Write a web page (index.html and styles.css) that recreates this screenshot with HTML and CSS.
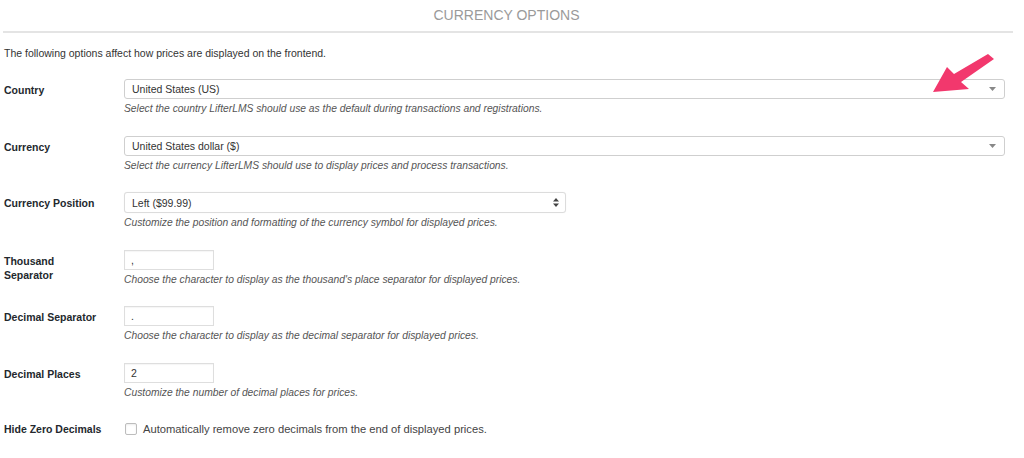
FILE: index.html
```html
<!DOCTYPE html>
<html>
<head>
<meta charset="utf-8">
<link rel="stylesheet" href="styles.css">
</head>
<body>
<div class="page">
  <h2 class="title">CURRENCY OPTIONS</h2>
  <div class="rule"></div>
  <p class="intro">The following options affect how prices are displayed on the frontend.</p>

  <div class="row">
    <div class="label">Country</div>
    <div class="field">
      <div class="select wide"><span>United States (US)</span>
        <svg class="caret" width="7" height="4" viewBox="0 0 7 4"><path d="M0 0H7L3.5 4Z" fill="#888"/></svg>
      </div>
      <div class="desc">Select the country LifterLMS should use as the default during transactions and registrations.</div>
    </div>
  </div>

  <div class="row">
    <div class="label">Currency</div>
    <div class="field">
      <div class="select wide"><span>United States dollar ($)</span>
        <svg class="caret" width="7" height="4" viewBox="0 0 7 4"><path d="M0 0H7L3.5 4Z" fill="#888"/></svg>
      </div>
      <div class="desc">Select the currency LifterLMS should use to display prices and process transactions.</div>
    </div>
  </div>

  <div class="row">
    <div class="label">Currency Position</div>
    <div class="field">
      <div class="select native"><span>Left ($99.99)</span>
        <svg class="updown" width="6" height="9" viewBox="0 0 6 9"><path d="M0 3.6H6L3 0Z M0 5.4H6L3 9Z" fill="#444"/></svg>
      </div>
      <div class="desc">Customize the position and formatting of the currency symbol for displayed prices.</div>
    </div>
  </div>

  <div class="row">
    <div class="label">Thousand<br>Separator</div>
    <div class="field">
      <div class="input">,</div>
      <div class="desc">Choose the character to display as the thousand's place separator for displayed prices.</div>
    </div>
  </div>

  <div class="row">
    <div class="label">Decimal Separator</div>
    <div class="field">
      <div class="input">.</div>
      <div class="desc">Choose the character to display as the decimal separator for displayed prices.</div>
    </div>
  </div>

  <div class="row">
    <div class="label">Decimal Places</div>
    <div class="field">
      <div class="input">2</div>
      <div class="desc">Customize the number of decimal places for prices.</div>
    </div>
  </div>

  <div class="row last">
    <div class="label">Hide Zero Decimals</div>
    <div class="field check-line">
      <span class="checkbox"></span>
      <span class="check-text">Automatically remove zero decimals from the end of displayed prices.</span>
    </div>
  </div>

  <svg class="pointer" width="70" height="48" viewBox="926 50 70 48">
    <polygon points="933,92 947,67 954,74 988,54 994,59 961,82 969,89" fill="#f2386d"/>
  </svg>
</div>
</body>
</html>
```

FILE: styles.css
```css
html, body {
  margin: 0;
  padding: 0;
  background: #fff;
}
body {
  font-family: "Liberation Sans", Arial, Helvetica, sans-serif;
  color: #23282d;
}
.page {
  position: relative;
  padding: 0 19px 0 4px;
}
.title {
  margin: 0;
  padding-top: 7px;
  font-size: 14px;
  line-height: 16px;
  font-weight: normal;
  text-align: center;
  color: #9a9a9a;
  padding-left: 4px;
}
.rule {
  margin: 8px -8px 0 -1px;
  height: 2px;
  background: #e4e4e4;
}
.intro {
  margin: 13px 0 19px 0;
  font-size: 10.5px;
  line-height: 14px;
  color: #333;
}
.row {
  display: grid;
  grid-template-columns: 120px 1fr;
  padding-bottom: 20.5px;
}
.label {
  font-size: 10.5px;
  font-weight: bold;
  line-height: 14px;
  padding-top: 4px;
  color: #23282d;
}
.field {
  display: flex;
  flex-direction: column;
  align-items: flex-start;
}
.select {
  box-sizing: border-box;
  height: 20px;
  border: 1px solid #cfcfcf;
  border-radius: 3px;
  display: flex;
  align-items: center;
  justify-content: space-between;
  padding: 0 6px 0 7px;
  font-size: 10.5px;
  color: #333;
  background: #fff;
}
.select.wide {
  width: 100%;
}
.select.native {
  width: 442px;
  height: 21px;
  border-color: #dcdcdc;
  box-shadow: 0 0 1px rgba(0,0,0,0.08);
}
.caret {
  margin-right: 2px;
}
.input {
  box-sizing: border-box;
  width: 90px;
  height: 20px;
  border: 1px solid #dedede;
  display: flex;
  align-items: center;
  padding-left: 6px;
  font-size: 10.5px;
  color: #333;
  box-shadow: inset 0 1px 1px rgba(0,0,0,0.04);
}
.desc {
  margin-top: 3px;
  font-size: 10.3px;
  line-height: 13px;
  font-style: italic;
  color: #555;
}
.row.last .label {
  padding-top: 3px;
}
.check-line {
  flex-direction: row;
  align-items: center;
  padding-top: 4px;
  height: 12px;
}
.checkbox {
  box-sizing: border-box;
  width: 12px;
  height: 12px;
  border: 1px solid #bdbdbd;
  border-radius: 2px;
  margin: 0 6px 0 1px;
  box-shadow: inset 0 1px 2px rgba(0,0,0,0.08);
}
.check-text {
  font-size: 11.2px;
  color: #444;
}
.pointer {
  position: absolute;
  left: 926px;
  top: 50px;
}
```
